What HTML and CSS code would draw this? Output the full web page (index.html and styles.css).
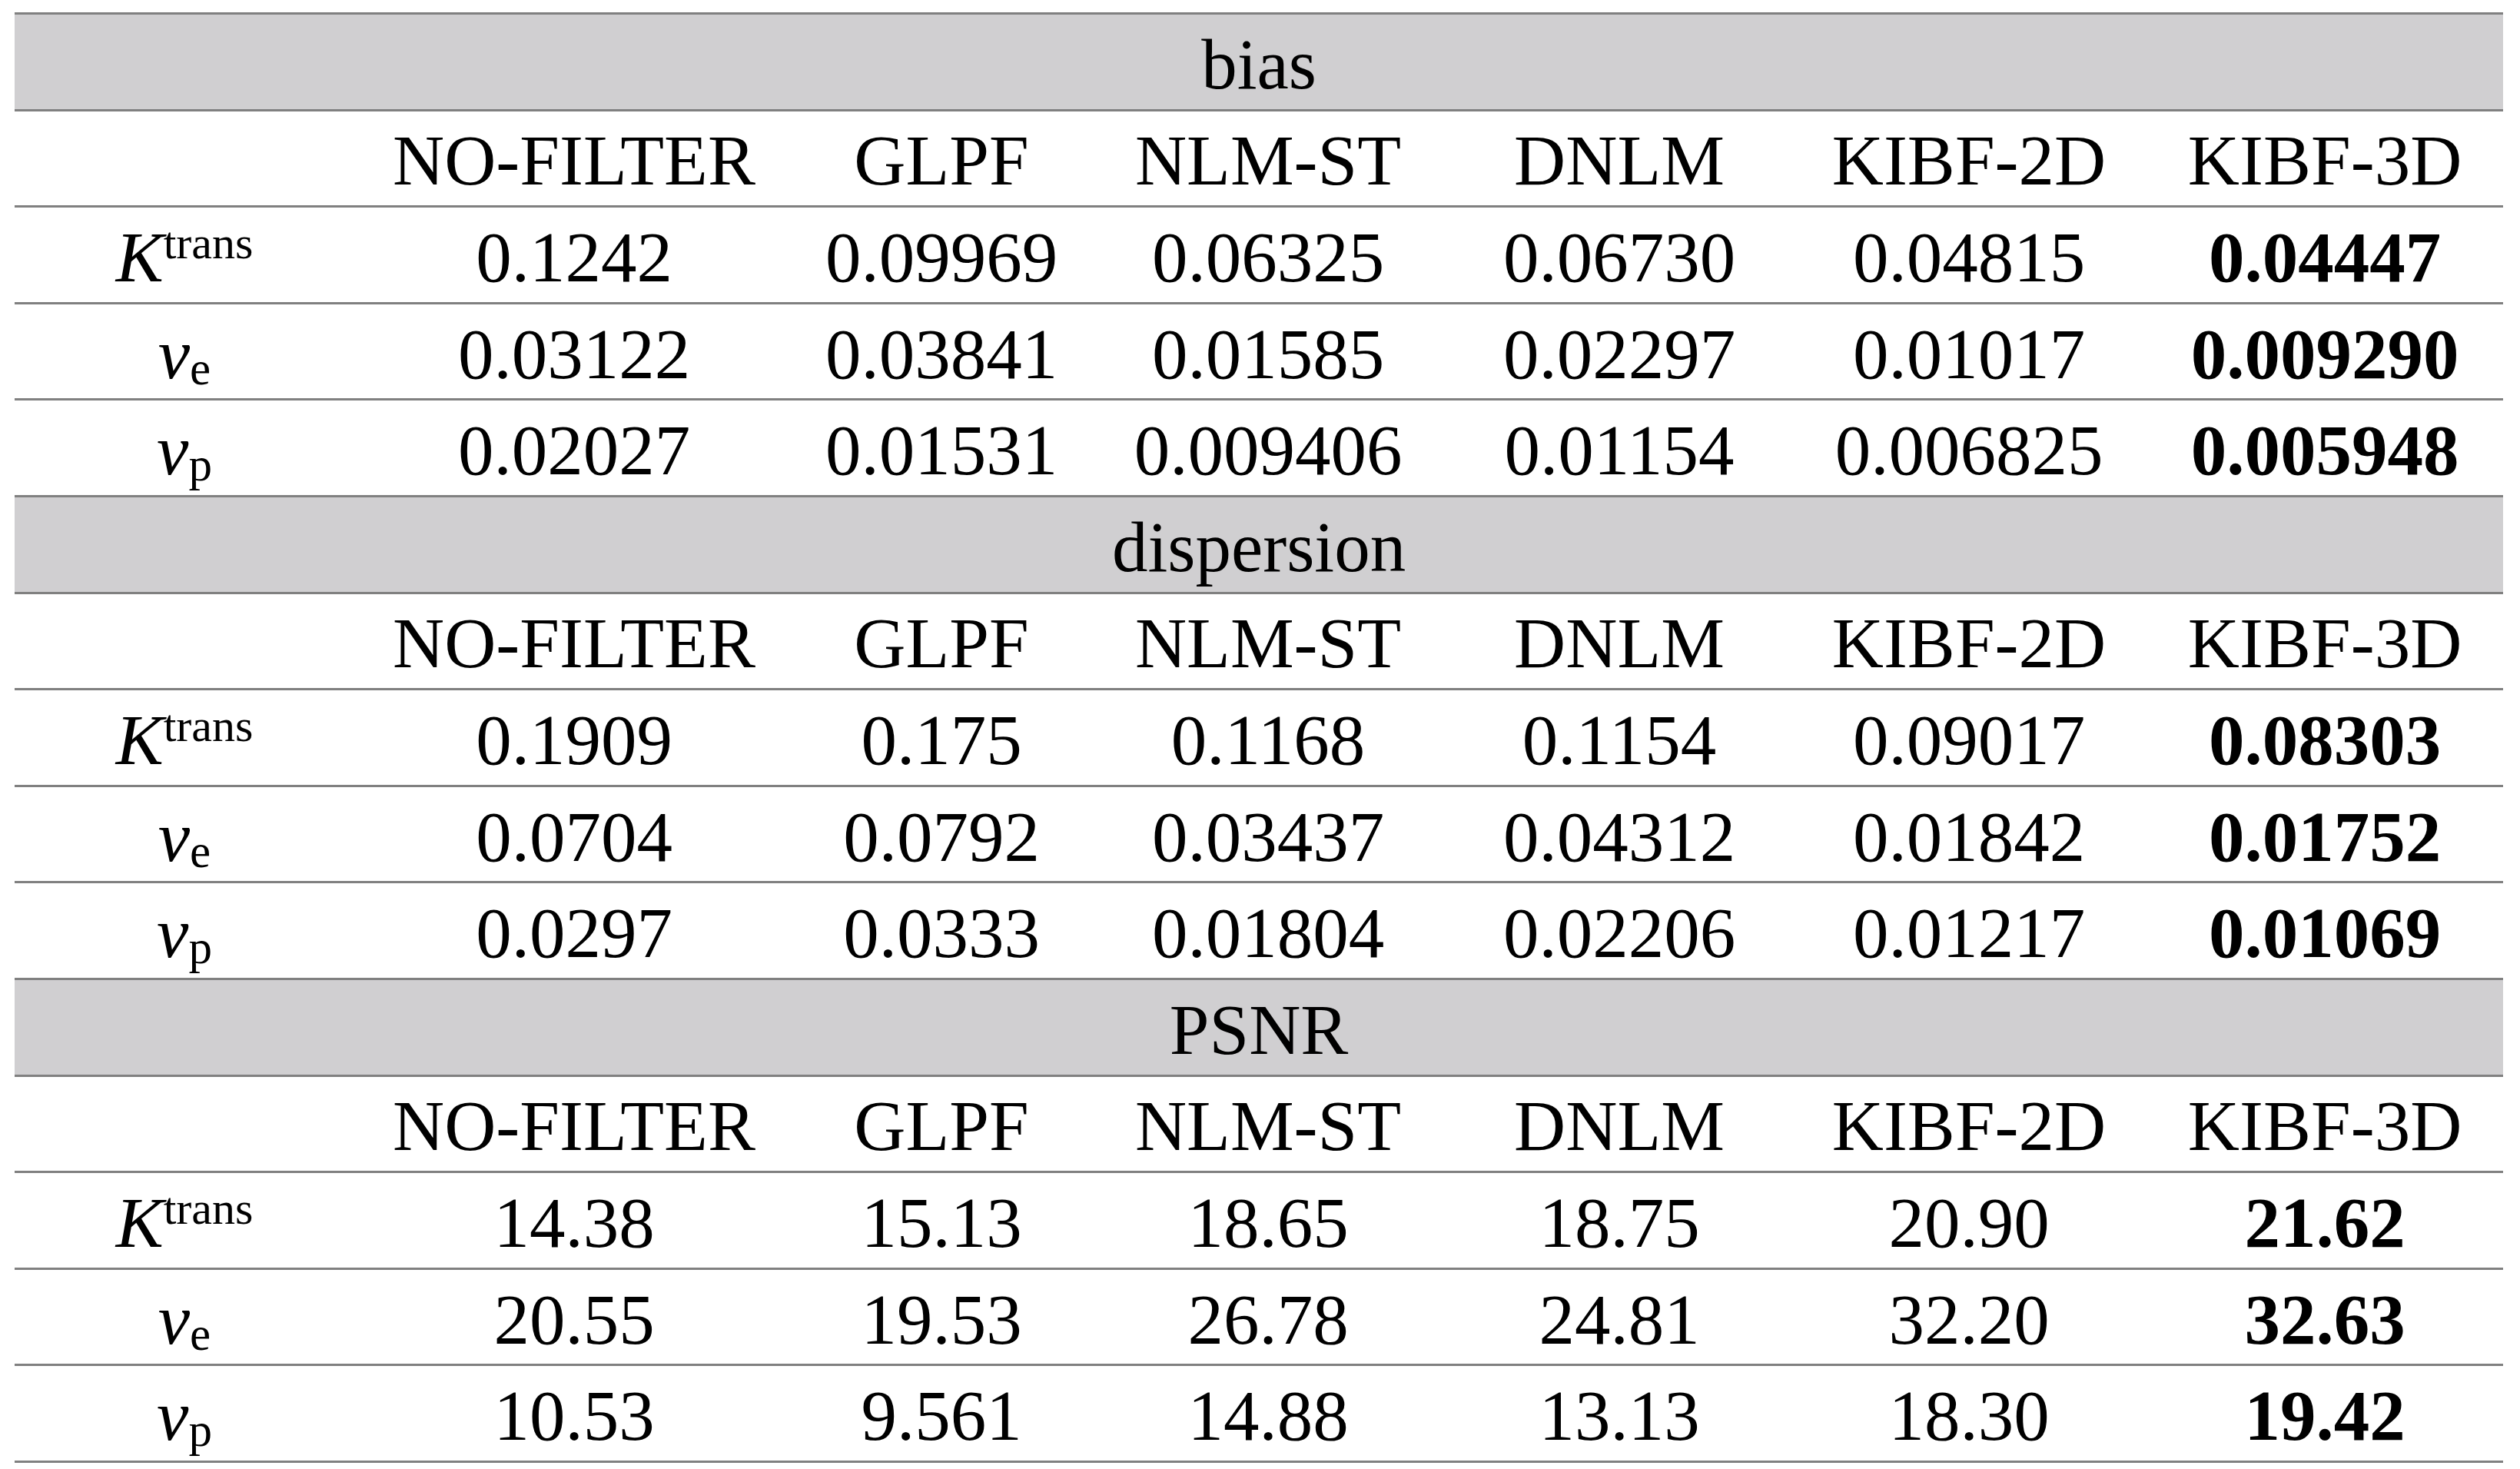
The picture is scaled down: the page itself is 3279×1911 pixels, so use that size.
FILE: index.html
```html
<!DOCTYPE html>
<html lang="en">
<head>
  <meta charset="UTF-8" />
  <title>Filter comparison</title>
  <link rel="stylesheet" href="styles.css">
</head>
<body>
  <table class="results">
    <colgroup>
      <col class="col-param">
      <col class="col-nofilter">
      <col class="col-glpf">
      <col class="col-nlmst">
      <col class="col-dnlm">
      <col class="col-kibf2d">
      <col class="col-kibf3d">
    </colgroup>
    <tbody>
      <tr class="section"><td colspan="7">bias</td></tr>
      <tr><td></td><td>NO-FILTER</td><td>GLPF</td><td>NLM-ST</td><td>DNLM</td><td>KIBF-2D</td><td>KIBF-3D</td></tr>
      <tr><td class="param"><i>K</i><sup>trans</sup></td><td>0.1242</td><td>0.09969</td><td>0.06325</td><td>0.06730</td><td>0.04815</td><td class="best">0.04447</td></tr>
      <tr><td class="param"><i>v</i><sub>e</sub></td><td>0.03122</td><td>0.03841</td><td>0.01585</td><td>0.02297</td><td>0.01017</td><td class="best">0.009290</td></tr>
      <tr><td class="param"><i>v</i><sub>p</sub></td><td>0.02027</td><td>0.01531</td><td>0.009406</td><td>0.01154</td><td>0.006825</td><td class="best">0.005948</td></tr>

      <tr class="section"><td colspan="7">dispersion</td></tr>
      <tr><td></td><td>NO-FILTER</td><td>GLPF</td><td>NLM-ST</td><td>DNLM</td><td>KIBF-2D</td><td>KIBF-3D</td></tr>
      <tr><td class="param"><i>K</i><sup>trans</sup></td><td>0.1909</td><td>0.175</td><td>0.1168</td><td>0.1154</td><td>0.09017</td><td class="best">0.08303</td></tr>
      <tr><td class="param"><i>v</i><sub>e</sub></td><td>0.0704</td><td>0.0792</td><td>0.03437</td><td>0.04312</td><td>0.01842</td><td class="best">0.01752</td></tr>
      <tr><td class="param"><i>v</i><sub>p</sub></td><td>0.0297</td><td>0.0333</td><td>0.01804</td><td>0.02206</td><td>0.01217</td><td class="best">0.01069</td></tr>

      <tr class="section"><td colspan="7">PSNR</td></tr>
      <tr><td></td><td>NO-FILTER</td><td>GLPF</td><td>NLM-ST</td><td>DNLM</td><td>KIBF-2D</td><td>KIBF-3D</td></tr>
      <tr><td class="param"><i>K</i><sup>trans</sup></td><td>14.38</td><td>15.13</td><td>18.65</td><td>18.75</td><td>20.90</td><td class="best">21.62</td></tr>
      <tr><td class="param"><i>v</i><sub>e</sub></td><td>20.55</td><td>19.53</td><td>26.78</td><td>24.81</td><td>32.20</td><td class="best">32.63</td></tr>
      <tr><td class="param"><i>v</i><sub>p</sub></td><td>10.53</td><td>9.561</td><td>14.88</td><td>13.13</td><td>18.30</td><td class="best">19.42</td></tr>
    </tbody>
  </table>
</body>
</html>
```

FILE: styles.css
```css
body {
  margin: 0;
  background: #fff;
  font-family: "Liberation Serif", "Times New Roman", serif;
  color: #000;
}
.results {
  margin: 16px 0 0 19px;
  width: 3238px;
  table-layout: fixed;
  border-collapse: collapse;
  font-size: 93px;
}
.col-param { width: 442px; }
.col-nofilter { width: 572px; }
.col-glpf { width: 384px; }
.col-nlmst { width: 466px; }
.col-dnlm { width: 448px; }
.col-kibf2d { width: 462px; }
.col-kibf3d { width: 464px; }
.results tr {
  height: 125.6px;
}
.results td {
  padding: 6px 0 0 0;
  text-align: center;
  vertical-align: middle;
  border-top: 3px solid #808080;
  border-bottom: 3px solid #808080;
  white-space: nowrap;
  line-height: 1;
}
.section td {
  background: #d0cfd1;
}
.best {
  font-weight: bold;
}
.param i {
  font-style: italic;
}
.param sup {
  font-size: 60px;
  vertical-align: 30px;
  line-height: 0;
}
.param sub {
  font-size: 61px;
  vertical-align: -8px;
  line-height: 0;
}
```
